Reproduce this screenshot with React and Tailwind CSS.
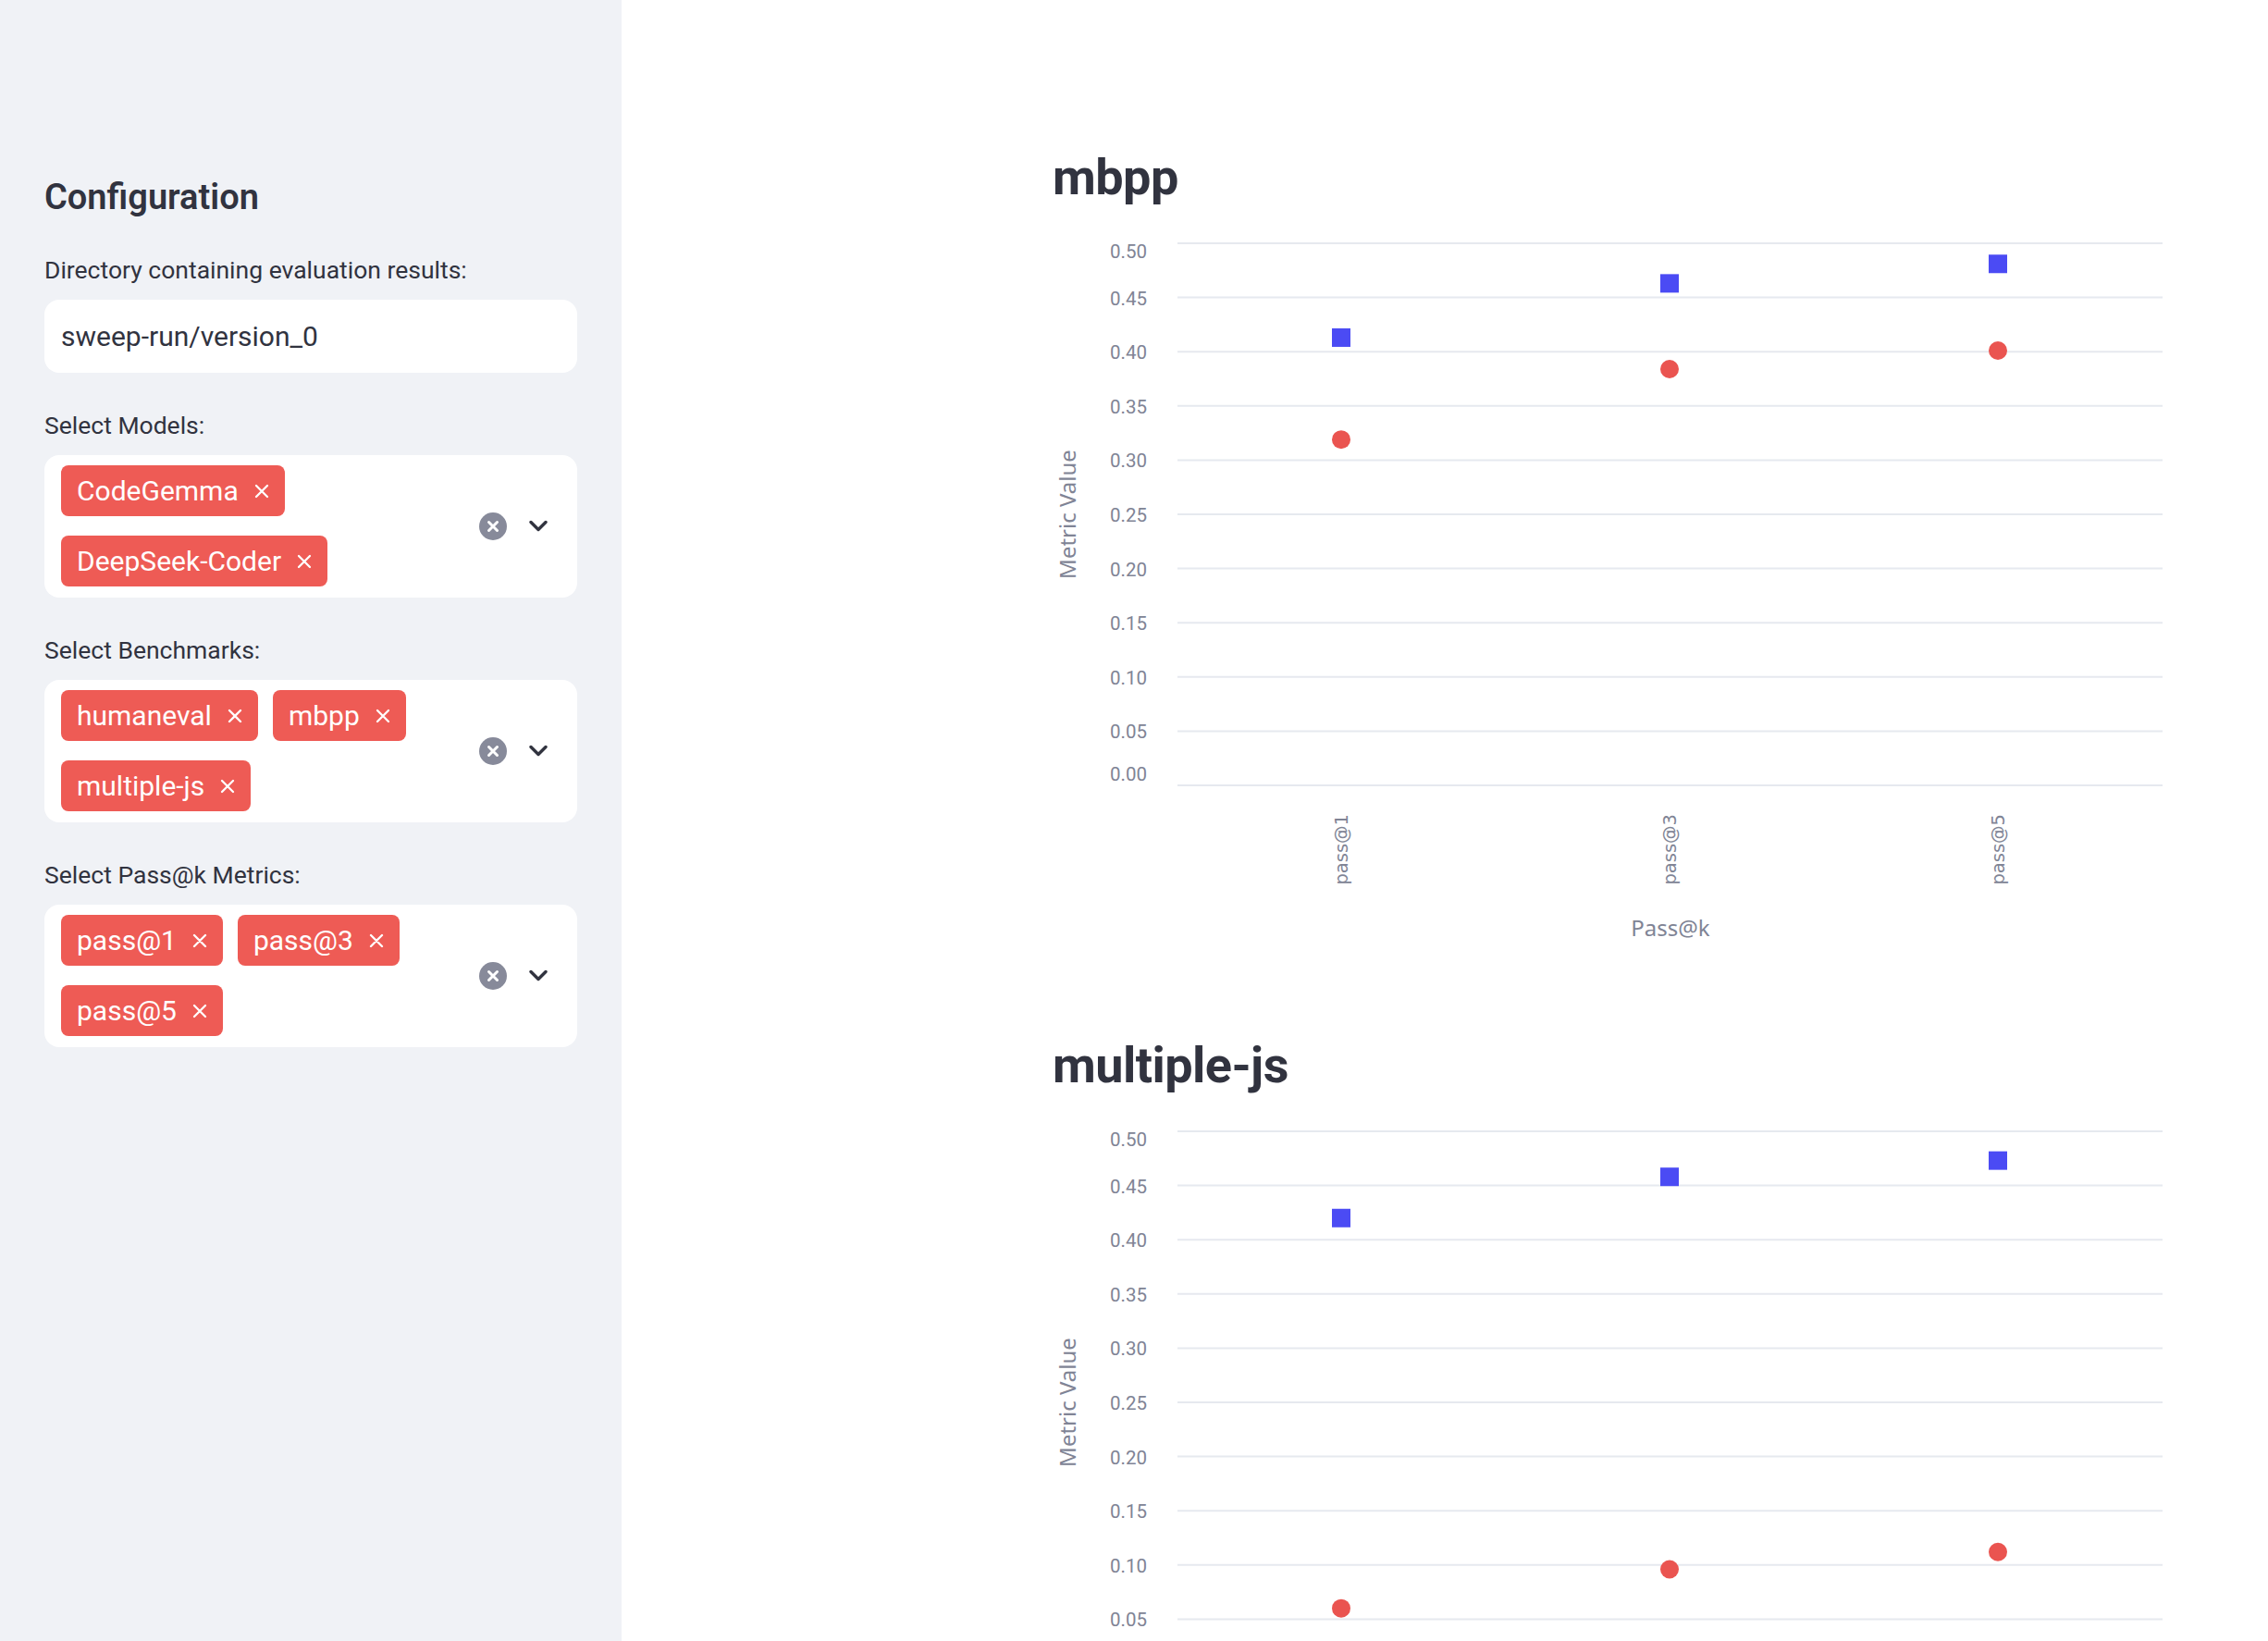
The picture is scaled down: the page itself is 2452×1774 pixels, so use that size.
import React from 'react';

const charts = [
  {
    title: 'mbpp',
    points: [
      { k: 'pass@1', a: 0.413, b: 0.319 },
      { k: 'pass@3', a: 0.463, b: 0.384 },
      { k: 'pass@5', a: 0.481, b: 0.401 },
    ],
  },
  {
    title: 'multiple-js',
    points: [
      { k: 'pass@1', a: 0.42, b: 0.06 },
      { k: 'pass@3', a: 0.458, b: 0.096 },
      { k: 'pass@5', a: 0.473, b: 0.112 },
    ],
  },
];

const ticks = [0, 0.05, 0.1, 0.15, 0.2, 0.25, 0.3, 0.35, 0.4, 0.45, 0.5];

// plot area in svg coords
const X0 = 135;
const X1 = 1200;
const Y_ZERO = 623;
const PER_UNIT = 1172;
const bandCenters = [312, 667, 1022];

const yOf = (v) => Y_ZERO - v * PER_UNIT;

function TagX() {
  return (
    <svg width="16" height="16" viewBox="0 0 16 16" className="shrink-0">
      <path d="M2 2 L14 14 M14 2 L2 14" stroke="white" strokeWidth="2.3" strokeLinecap="round" />
    </svg>
  );
}

function Tag({ label }) {
  return (
    <div className="flex h-[55px] items-center gap-[17px] rounded-[8px] bg-[#ee5b55] pl-[17px] pr-[17px] text-[30px] text-white">
      <span className="leading-none">{label}</span>
      <TagX />
    </div>
  );
}

function MultiSelect({ tags }) {
  return (
    <div className="flex items-center rounded-[16px] bg-white pt-[11px] pb-[12px] pl-[18px] pr-[32px]">
      <div className="flex flex-1 flex-wrap gap-x-[16px] gap-y-[21px]">
        {tags.map((t) => (
          <Tag key={t} label={t} />
        ))}
      </div>
      <div className="flex items-center gap-[24px]">
        <svg width="30" height="30" viewBox="0 0 30 30">
          <circle cx="15" cy="15" r="15" fill="#878a9a" />
          <path d="M10.5 10.5 L19.5 19.5 M19.5 10.5 L10.5 19.5" stroke="white" strokeWidth="3" strokeLinecap="round" />
        </svg>
        <svg width="20" height="13" viewBox="0 0 20 13">
          <polyline points="2,2.5 10,10.5 18,2.5" fill="none" stroke="#31333f" strokeWidth="3.4" strokeLinecap="round" strokeLinejoin="round" />
        </svg>
      </div>
    </div>
  );
}

function Field({ label, children }) {
  return (
    <div className="flex flex-col gap-[12px]">
      <label className="h-[40px] text-[26.5px] leading-[40px] text-[#31333f]">{label}</label>
      {children}
    </div>
  );
}

function Chart({ data }) {
  return (
    <svg width="1202" height="892" viewBox="0 0 1202 892" className="block">
      {ticks.map((t, i) => (
        <line key={'g' + i} x1={X0} x2={X1} y1={yOf(t)} y2={yOf(t)} stroke="#e6e9ef" strokeWidth="2" />
      ))}
      {ticks.map((t, i) => {
        let y = yOf(t) + 1;
        if (i === ticks.length - 1) y = yOf(t) + 9;
        if (i === 0) y = yOf(t) - 12;
        return (
          <text
            key={'t' + i}
            x={102}
            y={y}
            textAnchor="end"
            dominantBaseline="central"
            fontFamily="Roboto, sans-serif"
            fontSize="20.5"
            fill="#808495"
          >
            {t.toFixed(2)}
          </text>
        );
      })}
      <text
        transform="translate(15 330) rotate(-90)"
        textAnchor="middle"
        dominantBaseline="central"
        fontFamily="'Noto Sans', sans-serif"
        fontSize="24"
        fill="#808495"
      >
        Metric Value
      </text>
      {data.points.map((p, i) => (
        <text
          key={'x' + i}
          transform={`translate(${bandCenters[i]} 654) rotate(-90)`}
          textAnchor="end"
          dominantBaseline="central"
          fontFamily="'DejaVu Sans', sans-serif"
          fontSize="19.5"
          fill="#808495"
        >
          {p.k}
        </text>
      ))}
      <text
        x={668}
        y={776}
        textAnchor="middle"
        dominantBaseline="central"
        fontFamily="'Noto Sans', sans-serif"
        fontSize="24"
        fill="#808495"
      >
        Pass@k
      </text>
      {data.points.map((p, i) => (
        <g key={'p' + i}>
          <rect x={bandCenters[i] - 10} y={yOf(p.a) - 10} width="20" height="20" fill="#4b4bf4" />
          <circle cx={bandCenters[i]} cy={yOf(p.b)} r="10" fill="#ea5450" />
        </g>
      ))}
    </svg>
  );
}

export default function App() {
  return (
    <div className="flex h-screen w-full overflow-hidden bg-white font-['Roboto',sans-serif] text-[#31333f]">
      <aside className="h-full w-[672px] shrink-0 bg-[#f0f2f6] px-[48px] pt-[189px]">
        <h2 className="h-[48px] text-[38px] font-semibold leading-[48px] text-[#31333f]">Configuration</h2>
        <div className="mt-[35px] flex flex-col gap-[37px]">
          <Field label="Directory containing evaluation results:">
            <div className="flex h-[79px] items-center rounded-[16px] bg-white px-[18px] text-[30px] text-[#31333f]">
              sweep-run/version_0
            </div>
          </Field>
          <Field label="Select Models:">
            <MultiSelect tags={['CodeGemma', 'DeepSeek-Coder']} />
          </Field>
          <Field label="Select Benchmarks:">
            <MultiSelect tags={['humaneval', 'mbpp', 'multiple-js']} />
          </Field>
          <Field label="Select Pass@k Metrics:">
            <MultiSelect tags={['pass@1', 'pass@3', 'pass@5']} />
          </Field>
        </div>
      </aside>
      <main className="flex-1 pl-[466px] pt-[158px]">
        {charts.map((c) => (
          <section key={c.title}>
            <h3 className="h-[68px] text-[54px] font-bold leading-[68px] tracking-[-0.01em] text-[#31333f]">{c.title}</h3>
            <Chart data={c} />
          </section>
        ))}
      </main>
    </div>
  );
}
